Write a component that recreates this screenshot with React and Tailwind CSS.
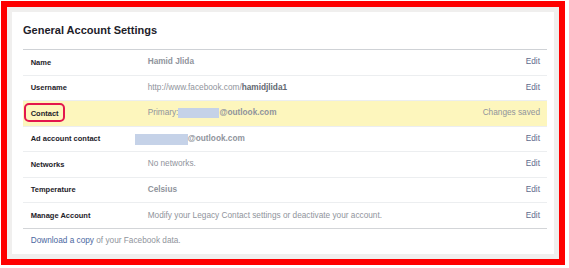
import React from 'react'

const ROWS = [
  { label: 'Name', value: <span className="font-bold">Hamid Jlida</span> },
  {
    label: 'Username',
    value: (
      <>
        http://www.facebook.com/<span className="font-bold text-[#616770]">hamidjlida1</span>
      </>
    ),
  },
  {
    label: 'Contact',
    highlight: true,
    value: (
      <span className="flex items-center">
        Primary:
        <span className="inline-block w-[41px] h-[10px] bg-[#c5d2e8]" />
        <span className="font-bold">@outlook.com</span>
      </span>
    ),
  },
  {
    label: 'Ad account contact',
    value: (
      <span className="flex items-center -ml-[13px]">
        <span className="inline-block w-[53px] h-[11px] bg-[#c5d2e8] mt-[2px]" />
        <span className="font-bold">@outlook.com</span>
      </span>
    ),
  },
  { label: 'Networks', value: 'No networks.' },
  { label: 'Temperature', value: <span className="font-bold">Celsius</span> },
  { label: 'Manage Account', value: 'Modify your Legacy Contact settings or deactivate your account.' },
]

export default function App() {
  return (
    <div className="w-[569px] h-[268px] bg-white font-['Liberation_Sans',Arial,sans-serif] overflow-hidden">
      <div className="ml-[1px] mt-[1px] w-[564px] h-[264px] border-[6px] border-[#fe0000] bg-[#f0efee] p-[5px]">
        <div className="w-full h-full bg-white pl-[11px] pr-[7px]">
          {/* Header */}
          <div className="h-[38px] flex items-center border-b border-[#cfd2d6]">
            <h1 className="text-[11px] font-bold text-[#1d2129] leading-none">General Account Settings</h1>
          </div>

          {/* Settings rows */}
          {ROWS.map((row, i) => (
            <div
              key={row.label}
              className={`relative h-[25.57px] flex items-center pl-[7.7px] pr-[7px] border-b ${
                i === ROWS.length - 1 ? 'border-[#d3d5d8]' : 'border-[#eceef0]'
              } ${row.highlight ? 'bg-[#fdf6bd]' : ''}`}
            >
              <div className="w-[117px] shrink-0 text-[7.5px] font-bold text-[#1d2129] leading-none">{row.label}</div>
              <div className="flex-1 text-[8.25px] text-[#90949c] leading-none whitespace-nowrap">{row.value}</div>
              <div className="text-[8.25px] leading-none text-[#90949c]">
                {row.highlight ? 'Changes saved' : <span className="text-[#5e6b8c]">Edit</span>}
              </div>
              {row.highlight && (
                <span className="absolute left-[1px] top-[2px] w-[41px] h-[19px] border-2 border-[#e3174d] rounded-[5px]" />
              )}
            </div>
          ))}

          {/* Footer link */}
          <div className="h-[25px] flex items-center pl-[7.7px] text-[8.25px] text-[#90949c] leading-none">
            <span className="text-[#4b67a1]">Download a copy</span>&nbsp;of your Facebook data.
          </div>
        </div>
      </div>
    </div>
  )
}
